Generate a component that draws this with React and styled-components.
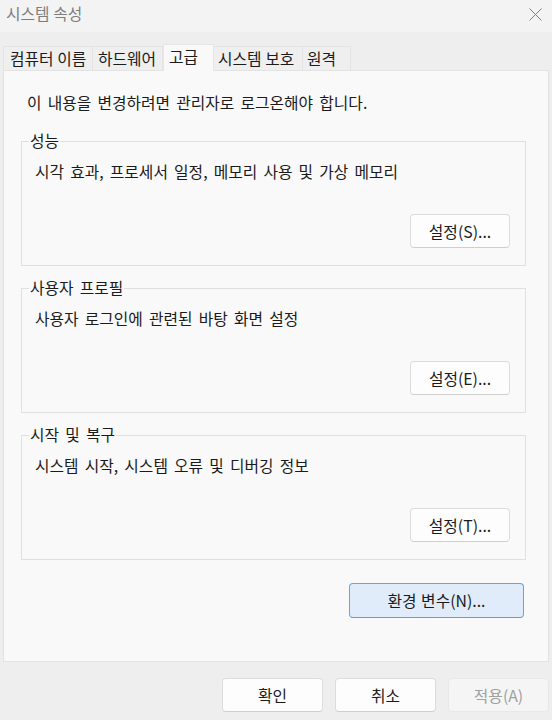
import React from 'react';
import styled, { createGlobalStyle } from 'styled-components';

const GlobalStyle = createGlobalStyle`
  html, body {
    margin: 0;
    padding: 0;
    background: #eeeeee;
  }
  body {
    font-family: 'Noto Sans CJK KR', 'Noto Sans', sans-serif;
    color: #1b1b1b;
  }
`;

const Window = styled.div`
  width: 552px;
  height: 720px;
  display: flex;
  flex-direction: column;
  background: #eeeeee;
  font-size: 15.8px;
  word-spacing: 2.6px;
  overflow: hidden;
`;

const TitleBar = styled.div`
  height: 32px;
  flex: none;
  display: flex;
  align-items: center;
  justify-content: space-between;
  padding: 0 10px 0 6px;
  background: #f3f3f3;
  color: #7d7d7d;
  box-sizing: border-box;
  word-spacing: 0;
`;

const Title = styled.span`
  line-height: 20px;
  margin-top: -4px;
`;

const CloseIcon = styled.svg`
  width: 13px;
  height: 13px;
  margin-top: -3px;
`;

const TabRow = styled.div`
  display: flex;
  align-items: flex-end;
  height: 27px;
  margin: 12px 0 -1px 3px;
  position: relative;
  z-index: 1;
  word-spacing: 0;
`;

const Tab = styled.div`
  box-sizing: border-box;
  width: ${p => p.$w}px;
  height: ${p => (p.$active ? '27px' : '25px')};
  padding: 0 0 0 ${p => p.$pad || 6}px;
  display: flex;
  align-items: center;
  line-height: 20px;
  background: ${p => (p.$active ? '#f9f9f9' : '#efefef')};
  border: 1px solid ${p => (p.$active ? '#e6e6e6' : '#e4e4e4')};
  border-bottom: ${p => (p.$active ? 'none' : '1px solid #e3e3e3')};
  border-left: ${p => (p.$first || p.$active ? undefined : 'none')};
  padding-bottom: ${p => (p.$active ? '2px' : '0')};
  color: #1b1b1b;
  white-space: nowrap;
`;

const Panel = styled.div`
  flex: 1;
  margin: 0 3px;
  background: #f9f9f9;
  border: 1px solid #e3e3e3;
  padding: 22px 22px 0 17px;
  display: flex;
  flex-direction: column;
`;

const Intro = styled.p`
  margin: 0 0 18px 6px;
  line-height: 20px;
`;

const Group = styled.fieldset`
  margin: 0 0 12px;
  padding: 11px 15px 17px 13px;
  border: 1px solid #e0e0e0;
  min-inline-size: 0;
  display: flex;
  flex-direction: column;
`;

const Legend = styled.legend`
  margin-left: -6px;
  padding: 0 1px;
  line-height: 20px;
`;

const Desc = styled.div`
  line-height: 20px;
`;

const ButtonRow = styled.div`
  display: flex;
  justify-content: flex-end;
  margin-top: ${p => p.$top || 0}px;
  padding-right: ${p => p.$right || 0}px;
`;

const Button = styled.button`
  box-sizing: border-box;
  width: ${p => p.$w || 100}px;
  height: ${p => p.$h || 34}px;
  font-family: inherit;
  font-size: 15.8px;
  word-spacing: 1px;
  border-radius: 4px;
  border: 1px solid ${p => (p.$primary ? '#64a6e3' : p.$disabled ? '#e8e8e8' : '#dcdcdc')};
  border-bottom-color: ${p => (p.$primary ? '#5a9fdf' : p.$disabled ? '#e8e8e8' : '#cfcfcf')};
  background: ${p => (p.$primary ? '#e0ecf9' : p.$disabled ? '#f5f5f5' : '#fdfdfd')};
  color: ${p => (p.$disabled ? '#a0a0a0' : '#1b1b1b')};
  padding: 0;
  cursor: default;
`;

const Footer = styled.div`
  flex: none;
  height: 58px;
  box-sizing: border-box;
  padding: 16px 3px 0 0;
  display: flex;
  justify-content: flex-end;
  gap: 12px;
`;

const groups = [
  { title: '성능', desc: '시각 효과, 프로세서 일정, 메모리 사용 및 가상 메모리', btn: '설정(S)...' },
  { title: '사용자 프로필', desc: '사용자 로그인에 관련된 바탕 화면 설정', btn: '설정(E)...' },
  { title: '시작 및 복구', desc: '시스템 시작, 시스템 오류 및 디버깅 정보', btn: '설정(T)...' },
];

const tabs = [
  { label: '컴퓨터 이름', w: 90, pad: 6 },
  { label: '하드웨어', w: 70, pad: 5 },
  { label: '고급', w: 51, pad: 5, active: true },
  { label: '시스템 보호', w: 89, pad: 4 },
  { label: '원격', w: 48, pad: 4 },
];

export default function App() {
  return (
    <>
      <GlobalStyle />
      <Window>
        <TitleBar>
          <Title>시스템 속성</Title>
          <CloseIcon viewBox="0 0 13 13">
            <path d="M0.5 0.5 L12.5 12.5 M12.5 0.5 L0.5 12.5" stroke="#808080" strokeWidth="1" fill="none" />
          </CloseIcon>
        </TitleBar>
        <TabRow>
          {tabs.map((t, i) => (
            <Tab key={t.label} $first={i === 0} $active={t.active} $w={t.w} $pad={t.pad}>
              {t.label}
            </Tab>
          ))}
        </TabRow>
        <Panel>
          <Intro>이 내용을 변경하려면 관리자로 로그온해야 합니다.</Intro>
          {groups.map(g => (
            <Group key={g.title}>
              <Legend>{g.title}</Legend>
              <Desc>{g.desc}</Desc>
              <ButtonRow $top={32}>
                <Button>{g.btn}</Button>
              </ButtonRow>
            </Group>
          ))}
          <ButtonRow $top={11} $right={2}>
            <Button $primary $w={175} $h={35}>환경 변수(N)...</Button>
          </ButtonRow>
        </Panel>
        <Footer>
          <Button $w={101}>확인</Button>
          <Button $w={101}>취소</Button>
          <Button $w={101} $disabled>적용(A)</Button>
        </Footer>
      </Window>
    </>
  );
}
